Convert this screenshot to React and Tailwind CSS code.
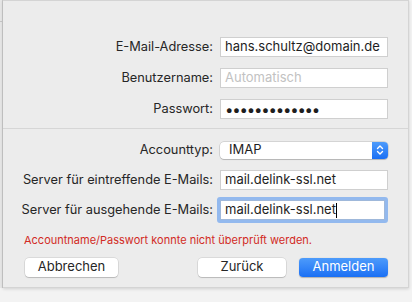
const font = { fontFamily: 'Inter, "Liberation Sans", sans-serif' };

const Row = ({ label, children, className = '' }) => (
    <div className={`flex items-center h-[20px] ${className}`}>
        <div className="w-[217px] pr-[7px] text-right text-[12.8px] text-[#262626] whitespace-nowrap">{label}</div>
        <div className="w-[168px] h-full flex items-center">{children}</div>
    </div>
);

const Field = ({ children, placeholder }) => (
    <div className="w-full h-[20px] bg-white border border-[#cfcfcf] flex items-center px-[4px] text-[13px] text-[#1e1e1e] whitespace-nowrap overflow-hidden">
        {children ?? <span className="text-[#c2c2c2]">{placeholder}</span>}
    </div>
);

const Button = ({ children, primary, className = '' }) => (
    <button
        className={`h-[19px] rounded-[4px] text-[13px] flex items-center justify-center ${
            primary
                ? 'bg-gradient-to-b from-[#4d9bfb] to-[#1a6ff4] text-white shadow-[0_0.5px_1px_rgba(0,0,0,0.25)]'
                : 'bg-white text-[#262626] shadow-[0_0_0_0.5px_rgba(0,0,0,0.15),0_1px_1px_rgba(0,0,0,0.15)]'
        } ${className}`}
    >
        {children}
    </button>
);

export default function App() {
    return (
        <div className="w-[412px] h-[302px] bg-[#f3f3f3] flex overflow-hidden" style={font}>
            <div className="w-[3px] h-[288px] bg-[#e6e6e6] border-r border-[#c9c9c9] flex flex-col">
                <div className="h-[22px] border-b border-[#c6c6c6]" />
            </div>
            <div className="w-[406px] h-[288px] bg-[#ececec] border-t border-[#d4d4d4] border-r border-[#d0d0d0] border-b shadow-[0_1px_3px_rgba(0,0,0,0.15)] flex flex-col">
                <div className="pt-[36px] flex flex-col gap-[11px]">
                    <Row label="E-Mail-Adresse:">
                        <Field>hans.schultz@domain.de</Field>
                    </Row>
                    <Row label="Benutzername:">
                        <Field placeholder="Automatisch" />
                    </Row>
                    <Row label="Passwort:">
                        <Field>
                            <span className="text-[15px] tracking-[-1.2px] leading-none">•••••••••••••</span>
                        </Field>
                    </Row>
                </div>
                <div className="mt-[9px] border-t border-[#d6d6d6]" />
                <div className="pt-[11px] flex flex-col gap-[10px]">
                    <Row label="Accounttyp:">
                        <div className="w-full h-[17px] bg-white rounded-[4px] shadow-[0_0_0_0.5px_rgba(0,0,0,0.2),0_1px_1px_rgba(0,0,0,0.15)] flex items-center text-[13px] text-[#1e1e1e]">
                            <span className="flex-1 pl-[9px]">IMAP</span>
                            <div className="w-[16px] h-full rounded-r-[4px] bg-gradient-to-b from-[#4d9bfb] to-[#1a6ff4] flex items-center justify-center">
                                <svg width="8" height="12" viewBox="0 0 8 12" fill="none" stroke="white" strokeWidth="1.4" strokeLinecap="round" strokeLinejoin="round">
                                    <path d="M1.5 4.5 L4 2 L6.5 4.5" />
                                    <path d="M1.5 7.5 L4 10 L6.5 7.5" />
                                </svg>
                            </div>
                        </div>
                    </Row>
                    <Row label="Server für eintreffende E-Mails:">
                        <Field>mail.delink-ssl.net</Field>
                    </Row>
                    <Row label="Server für ausgehende E-Mails:">
                        <div className="w-[174px] h-[26px] -ml-[3px] rounded-[3px] border-[3px] border-[#93b9ee] flex">
                            <div className="flex-1 bg-white border border-[#9fb8da] flex items-center px-[4px] text-[13px] text-[#1e1e1e] whitespace-nowrap">
                                mail.delink-ssl.net<span className="inline-block w-px h-[15px] bg-black" />
                            </div>
                        </div>
                    </Row>
                </div>
                <div className="mt-[12px] pl-[21px] text-[11px] text-[#d22b25] whitespace-nowrap">
                    Accountname/Passwort konnte nicht überprüft werden.
                </div>
                <div className="mt-[9px] flex pl-[22px]">
                    <Button className="w-[93px]">Abbrechen</Button>
                    <Button className="w-[88px] ml-[80px]">Zurück</Button>
                    <Button primary className="w-[89px] ml-[13px]">Anmelden</Button>
                </div>
            </div>
            <div className="flex-1" />
        </div>
    );
}
